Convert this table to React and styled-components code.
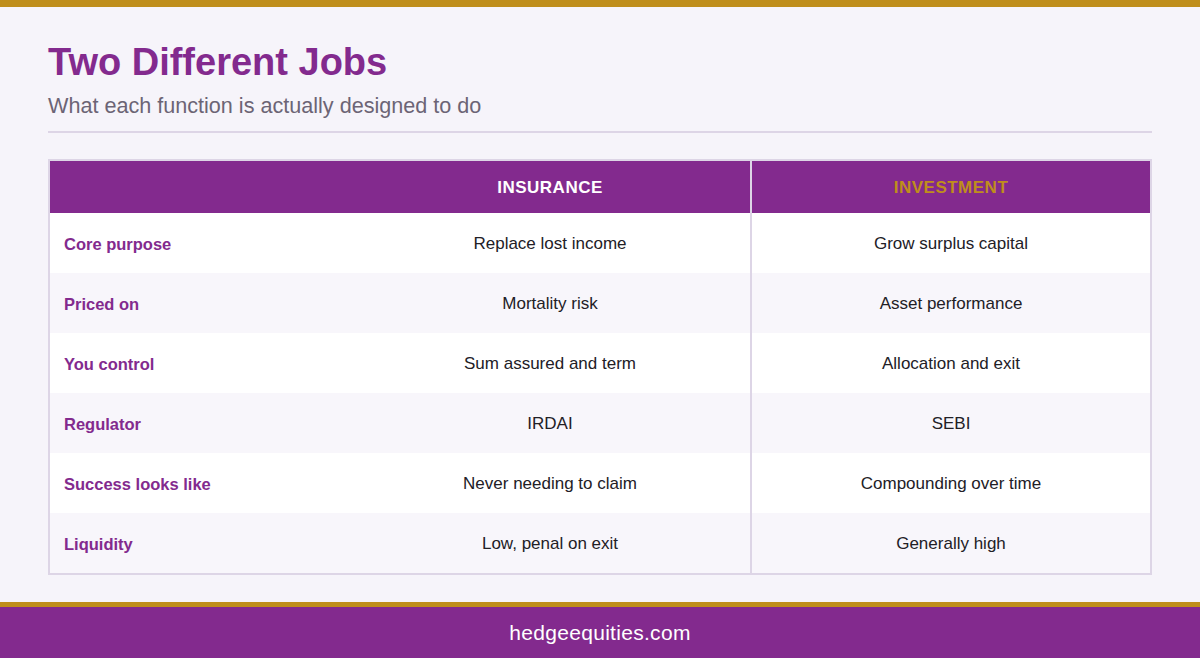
import React from 'react';
import styled, { createGlobalStyle } from 'styled-components';

const GlobalStyle = createGlobalStyle`
  html, body {
    margin: 0;
    padding: 0;
  }
  body {
    font-family: "Liberation Sans", Arial, sans-serif;
    background: #F6F4FA;
  }
`;

const purple = '#832A8E';
const gold = '#BF8E1B';
const line = '#DDD5E6';

const rows = [
  { label: 'Core purpose', insurance: 'Replace lost income', investment: 'Grow surplus capital' },
  { label: 'Priced on', insurance: 'Mortality risk', investment: 'Asset performance' },
  { label: 'You control', insurance: 'Sum assured and term', investment: 'Allocation and exit' },
  { label: 'Regulator', insurance: 'IRDAI', investment: 'SEBI' },
  { label: 'Success looks like', insurance: 'Never needing to claim', investment: 'Compounding over time' },
  { label: 'Liquidity', insurance: 'Low, penal on exit', investment: 'Generally high' },
];

const Page = styled.div`
  min-height: 100vh;
  display: flex;
  flex-direction: column;
  border-top: 7px solid ${gold};
  box-sizing: border-box;
  background: #F6F4FA;
`;

const Main = styled.main`
  flex: 1;
  padding: 33px 48px 0;
`;

const Title = styled.h1`
  margin: 0;
  font-size: 38px;
  line-height: 1.2;
  font-weight: 700;
  color: ${purple};
`;

const Subtitle = styled.p`
  margin: 7px 0 0;
  font-size: 21.6px;
  line-height: 1.2;
  color: #6C6475;
`;

const Divider = styled.hr`
  margin: 12px 0 26px;
  border: 0;
  height: 2px;
  background: ${line};
`;

const Table = styled.div`
  border: 2px solid ${line};
  display: grid;
  grid-template-columns: 3fr 4fr 4fr;
`;

const HeadCell = styled.div`
  box-sizing: border-box;
  height: 52px;
  padding-top: 3px;
  display: flex;
  align-items: center;
  justify-content: center;
  background: ${purple};
  color: ${(p) => p.$color || '#fff'};
  font-size: 17px;
  font-weight: 700;
  letter-spacing: 0.5px;
  border-left: ${(p) => (p.$divided ? `2px solid ${line}` : '0')};
`;

const Cell = styled.div`
  box-sizing: border-box;
  height: 60px;
  padding: ${(p) => (p.$label ? '3px 14px 0' : '3px 0 0')};
  display: flex;
  align-items: center;
  justify-content: ${(p) => (p.$label ? 'flex-start' : 'center')};
  background: ${(p) => (p.$alt ? '#F8F6FB' : '#FFFFFF')};
  color: ${(p) => (p.$label ? purple : '#222026')};
  font-size: ${(p) => (p.$label ? '16.5px' : '17px')};
  font-weight: ${(p) => (p.$label ? 700 : 400)};
  border-left: ${(p) => (p.$divided ? `2px solid ${line}` : '0')};
`;

const Footer = styled.footer`
  height: 51px;
  border-top: 5px solid ${gold};
  background: ${purple};
  display: flex;
  align-items: center;
  justify-content: center;
  color: #fff;
  font-size: 21px;
  letter-spacing: 0.3px;
`;

export default function App() {
  return (
    <>
      <GlobalStyle />
      <Page>
        <Main>
          <Title>Two Different Jobs</Title>
          <Subtitle>What each function is actually designed to do</Subtitle>
          <Divider />
          <Table>
            <HeadCell />
            <HeadCell>INSURANCE</HeadCell>
            <HeadCell $divided $color={gold}>INVESTMENT</HeadCell>
            {rows.map((r, i) => (
              <React.Fragment key={r.label}>
                <Cell $label $alt={i % 2 === 1}>{r.label}</Cell>
                <Cell $alt={i % 2 === 1}>{r.insurance}</Cell>
                <Cell $divided $alt={i % 2 === 1}>{r.investment}</Cell>
              </React.Fragment>
            ))}
          </Table>
        </Main>
        <Footer>hedgeequities.com</Footer>
      </Page>
    </>
  );
}
